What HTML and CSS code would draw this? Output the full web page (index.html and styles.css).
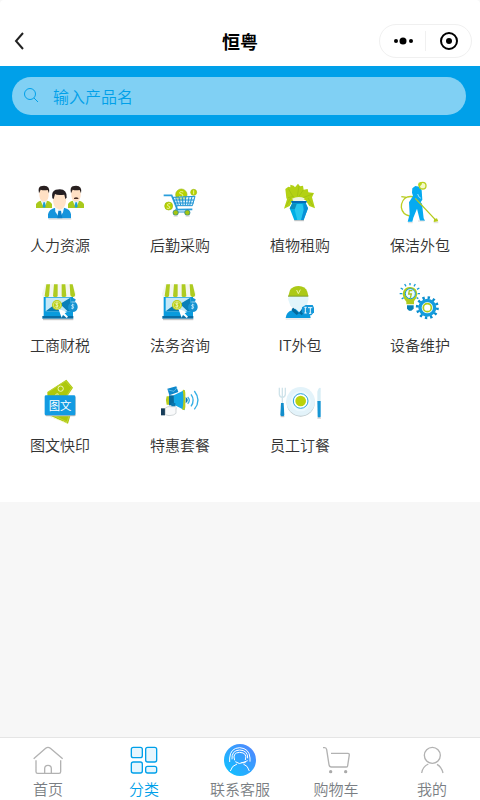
FILE: index.html
```
<!DOCTYPE html>
<html lang="zh-CN">
<head>
    <meta charset="UTF-8">
    <meta name="viewport" content="width=device-width, initial-scale=1.0">
    <title>恒粤</title>
    <link rel="stylesheet" href="styles.css">
</head>
<body>

    <header class="navbar">
        <button class="back" aria-label="返回">
            <svg width="16" height="20" viewBox="0 0 16 20"><path d="M11 2L4 10L11 18" fill="none" stroke="#222" stroke-width="2"/></svg>
        </button>
        <h1>恒粤</h1>
        <div class="capsule">
            <button aria-label="更多">
                <svg width="20" height="20" viewBox="0 0 20 20"><circle cx="3" cy="10" r="2"/><circle cx="10" cy="10" r="3.500"/><circle cx="18" cy="10" r="2"/></svg>
            </button>
            <button aria-label="关闭">
                <svg width="20" height="20" viewBox="0 0 20 20"><circle cx="10" cy="10" r="8" fill="none" stroke="#000" stroke-width="2"/><circle cx="10" cy="10" r="3"/></svg>
            </button>
        </div>
    </header>

    <form class="search">
        <label class="search-box">
            <svg width="16" height="16" viewBox="0 0 16 16" fill="none" stroke="#00a0e9"><circle cx="7" cy="6" r="5.500"/><path d="M11 10l4 4"/></svg>
            <input type="text" placeholder="输入产品名" aria-label="输入产品名">
        </label>
    </form>

    <main class="grid">
        <a class="item" href="#">
            <svg viewBox="30 0 180 180">
                <g id="clerk">
                    <path d="M48 114V103Q50 95 63 92L72 98L81 92Q94 95 96 103V114z" fill="#a9c91c"/>
                    <path d="M64 88h16v8l-8 17l-9-18z" fill="#e9f4f8"/>
                    <path d="M70 97h5l2 13l-5 4l-4-4z" fill="#1a9fd8"/>
                    <path d="M58 65Q56 94 72 95Q88 94 86 65Q84 56 72 56T58 65z" fill="#ffe0c4"/>
                    <path d="M57 70Q52 49 66 48Q92 44 87 70L83 60Q70 62 62 59z" fill="#29201f"/>
                </g>
                <use href="#clerk" x="96"/>
                <path d="M162 84q6-5 13 0v3h-13z" fill="#4a3028"/>
                <path d="M84 145V133Q87 117 106 113L118 119L132 113Q151 117 153 133V145z" fill="#1594dc"/>
                <path d="M105 110h28l-4 17-10 18-13-20z" fill="#f2faff"/>
                <path d="M115 122h8l4 23h-15z" fill="#0b80c9"/>
                <path d="M99 78Q97 116 118 119Q141 116 138 78Q135 66 119 66T99 78z" fill="#ffe2c8"/>
                <path d="M97 85Q93 64 107 59Q142 51 140 83L136 87L133 74Q112 77 105 72L101 87z" fill="#241e22"/>
                <path d="M86 147h68" stroke="#bbb" stroke-width="2"/>
            </svg>
            <span>人力资源</span>
        </a>
        <a class="item" href="#">
            <svg viewBox="30 0 180 180" fill="none">
                <g fill="#b8d200" stroke="#9bb91a" stroke-width="2"><circle cx="124" cy="74" r="17"/><circle cx="161" cy="67" r="9"/><circle cx="86" cy="108" r="12"/></g>
                <path d="M130 66q-12-4-11 4 12 2 10 9-5 5-12 0M91 101q-11-1-8 6 9 2 6 7-4 3-9 0M161 61v12" stroke="#edf69a" stroke-width="3"/>
                <path d="M71 76h24l17 43 45-1" stroke="#2a9edc" stroke-width="5"/>
                <path d="M99 82l66-3-8 28h-48z" fill="#c3eafa" fill-opacity=".6" stroke="#2094d4" stroke-width="3"/>
                <path d="M107 82l8 24M117 82l5 24M127 82l2 24M137 81l-1 25M147 80l-4 26M156 80l-7 27M103 90h60M106 99h55M111 108l-5 18h37" stroke="#2094d4" stroke-width="3"/>
                <g fill="#a5c411" stroke="#167f9e" stroke-width="2"><circle cx="107" cy="128" r="8"/><circle cx="142" cy="128" r="8"/></g>
                <path d="M101 138h12m24 0h12" stroke="#ccc" stroke-width="3"/>
            </svg>
            <span>后勤采购</span>
        </a>
        <a class="item" href="#">
            <svg viewBox="30 0 180 180">
                <path d="M79 84l-3-27 9-7 6 2 0-8 10 3 4 5 9-11 6 8 9-2 2 12 12-2 2 10 17 2-6 13 9 33-17-7-12-18-18-6-20 8-9 16-17 8 9-28z" fill="#b3d114"/>
                <path d="M85 56l14 24M117 48l-5 31M130 60l-14 20M158 72l-29 11M84 83l18-4M144 84l15 24M92 84l-14 24" fill="none" stroke="#9cbd12" stroke-width="2"/>
                <path d="M96 86q18-9 38-1l-7 9h-25z" fill="#edf4df"/>
                <path d="M94 93h46l-2 8 6 14-13 36h-28l-14-36 7-14z" fill="#00aee5"/>
                <path d="M94 93h46l-2 7H96z" fill="#056bb5"/>
                <path d="M96 101h19l-7 17-19-2z" fill="#0b8dbd"/><path d="M110 102h17l5 18-8 30h-12l-8-31z" fill="#27c6ee"/><path d="M131 101l7 1 6 13-14 36h-7l8-31z" fill="#0a90d6"/>
                <path d="M103 152h29" stroke="#bbb" stroke-width="3"/>
            </svg>
            <span>植物租购</span>
        </a>
        <a class="item" href="#">
            <svg viewBox="30 0 180 180">
                <path d="M120 94Q103 75 82 81Q64 88 64 112Q67 133 89 138" fill="none" stroke="#bccf23" stroke-width="4"/>
                <path d="M97 55l9-7 12 2 7 11 2 28-5 8 4 4 5 44 4 7H120l-9-36-11 27-3 12H83l6-22-2-36 12-19-3-10z" fill="#05aaf0"/>
                <path d="M113 72l4 9 6 4" fill="none" stroke="#e3f8ff" stroke-width="2"/>
                <circle cx="128" cy="47" r="10" fill="#f4fac8" stroke="#bbd022" stroke-width="4"/>
                <path d="M116 38l8-2 2 6-8 9-4-6z" fill="#b9d51f"/>
                <path d="M64 80l16 2M106 85l62 66" stroke="#b4ca19" stroke-width="4" fill="none"/>
                <path d="M162 148l9-3 4 9-14 2z" fill="#b4ca19"/>
                <path d="M84 158h14m16-5h19m28 5h14" stroke="#ccc" stroke-width="2"/>
            </svg>
            <span>保洁外包</span>
        </a>
        <a class="item" href="#">
            <svg viewBox="30 0 180 180">
                <g id="shop">
                    <path d="M76 43h82l10 29q0 10-9 10H75q-11-2-9-11z" fill="#f5f6ef"/>
                    <path d="M79 43h11l-3 36q-8 6-13-1zM102 43h11v36q-7 6-14 0zM125 43h11l3 36q-8 6-14 0zM149 43h9l7 30q1 9-8 8-5-1-6-5z" fill="#aecb20"/>
                    <path d="M71 81h88v58H71z" fill="#0a9bdd"/>
                    <path d="M77 83h74v41H77z" fill="#c3e8f8"/><path d="M77 124l29-22 19 22zM151 83l-31 19 23 22h8z" fill="#087eb8"/>
                    <path d="M67 138h93v8H67z" fill="#096da5"/><path d="M69 149h91" stroke="#bbb" stroke-width="3"/>
                    <circle cx="111" cy="105" r="15" fill="#b9cf17"/><circle cx="111" cy="105" r="11" fill="none" stroke="#e7ef9c" stroke-width="2"/>
                    <path d="M115 100q-8-3-8 2 9 3 7 7-3 3-8 0M111 97v17" fill="none" stroke="#f7fad7" stroke-width="2"/>
                    <path d="M153 88l5-5 9 5-2 7q9 7 8 18-3 13-15 13-14-2-14-14 1-11 11-15z" fill="#1592d1"/>
                    <path d="M163 105q-9-3-9 2 9 2 7 7-3 3-8 0M158 101v17M154 96h12" fill="none" stroke="#d8f3ff" stroke-width="2"/>
                    <path d="M115 116l26 10-7 4 10 10-4 4-11-10-4 9z" fill="#fff"/>
                </g>
            </svg>
            <span>工商财税</span>
        </a>
        <a class="item" href="#">
            <svg viewBox="30 0 180 180"><use href="#shop"/></svg>
            <span>法务咨询</span>
        </a>
        <a class="item" href="#">
            <svg viewBox="30 0 180 180">
                <path d="M87 77h56l3 9-6 22-17 14h-17l-15-15-7-20z" fill="#e1f5fb"/>
                <path d="M85 78l5-18q9-12 26-12 20 1 26 17l3 13z" fill="#acc917"/>
                <path d="M110 60l5 11 6-12" fill="none" stroke="#eef5aa" stroke-width="3"/>
                <path d="M84 77h61v3H84z" fill="#7f9e28"/>
                <path d="M77 144q2-18 19-23l10-5 11 10 12-8 21 16 2 10z" fill="#0a99dc"/>
                <path d="M95 117l5-4 17 17-7 5-13-11zM117 130l10-15 7 5-8 16z" fill="#04699c"/>
                <path d="M126 112l11-7h21l4 8v14l-8 9h-20l-9-10z" fill="#1598da"/>
                <path d="M133 112h7m-4 0v17m-3 0h7M144 113h13m-6 0v17m-4 0h7" fill="none" stroke="#eefaff" stroke-width="3"/>
                <path d="M77 147h74" stroke="#ccc" stroke-width="2"/>
            </svg>
            <span>IT外包</span>
        </a>
        <a class="item" href="#">
            <svg viewBox="30 0 180 180">
                <path d="M79 103V95Q64 79 70 63 77 50 92 51 112 54 112 73 111 84 102 94V103z" fill="#afcb1d"/>
                <circle cx="91" cy="71" r="15" fill="#ecfaff" stroke="#139cd6" stroke-width="3"/>
                <path d="M97 62H88l-2 10h8l-3 12" fill="none" stroke="#a9c31d" stroke-width="4"/>
                <path d="M81 106h20v10l-7 6h-7l-6-6z" fill="#0680b5"/>
                <path d="M90 39v7M74 42l4 7M106 42l-4 7M62 54l7 4M118 54l-7 4M59 71h8M120 71h-7M65 87l6-4M115 86l-5-3" stroke="#159bd6" stroke-width="4"/>
                <circle cx="142" cy="113" r="30" fill="none" stroke="#0b8dce" stroke-width="9" stroke-dasharray="7 8.700"/>
                <circle cx="142" cy="113" r="22" fill="#ebf8fc" stroke="#149cdd" stroke-width="10"/>
                <circle cx="142" cy="113" r="12" fill="#fff" stroke="#b0cd16" stroke-width="5"/>
            </svg>
            <span>设备维护</span>
        </a>
        <a class="item" href="#">
            <svg viewBox="30 0 180 180">
                <path d="M82 66l57-37 20 24-37 55H83zM79 132l65 29 18-61-60-7z" fill="#adc80c"/>
                <path d="M85 66l52-33 18 20-27 43M91 131l50 25 11-32" fill="none" stroke="#c9d94a" stroke-width="2"/>
                <circle cx="122" cy="56" r="8" fill="none" stroke="#f1f6b8" stroke-width="3"/><path d="M116 73q-7-5-10 3" stroke="#f1f6b8" stroke-width="3" fill="none"/>
                <path d="M91 140l50 20" stroke="#f4f7bd" stroke-width="3" stroke-dasharray="6 4"/>
                <rect x="76" y="79" width="91" height="60" rx="4" fill="#bbb"/>
                <rect x="74" y="76" width="92" height="60" rx="4" fill="#139be2"/>
                <text class="pic-text" x="120" y="119" text-anchor="middle">图文</text>
            </svg>
            <span>图文快印</span>
        </a>
        <a class="item" href="#">
            <svg viewBox="30 0 180 180">
                <path d="M82 56l27-7 6 17-27 10z" fill="#0c87cb"/><path d="M85 60l17 4 9-11" fill="none" stroke="#83cff1" stroke-width="2"/>
                <path d="M80 79h9v25h-9q-5-12 0-25z" fill="#b6cc1c"/>
                <path d="M87 76h20v30H87z" fill="#076a9d"/><path d="M101 76l33-16v61l-32-17z" fill="#13a7e5"/>
                <path d="M128 60q8-3 8 12v38q-1 13-9 9 6-31 1-59z" fill="#b6cc1c"/>
                <path d="M137 81q13 9 0 19" fill="#0678ae"/>
                <path d="M143 81q10 10 0 20M153 73q13 18 0 36M163 63q22 28 0 55" fill="none" stroke="#35afe5" stroke-width="4"/>
                <path d="M63 115h12v21H63z" fill="#173c59"/>
                <path d="M76 114l8-4h22q5 2 2 7v13l-8 5-13 2-11-3z" fill="#f9fafb" stroke="#bbc2c6" stroke-width="2"/>
                <path d="M94 109V98l12 1v10" fill="#0a75ac"/>
            </svg>
            <span>特惠套餐</span>
        </a>
        <a class="item" href="#">
            <svg viewBox="30 0 180 180">
                <circle cx="122" cy="98" r="42" fill="#bcc8cc"/><circle cx="122" cy="94" r="43" fill="#e3f3fa"/>
                <circle cx="122" cy="94" r="30" fill="#edf9fe"/><circle cx="122" cy="93" r="22" fill="#fff" stroke="#2ba3dc" stroke-width="3"/><circle cx="122" cy="93" r="16" fill="#bbd20b"/>
                <path d="M58 53v20q1 8 9 9 8-1 9-9V53M67 53v47" fill="none" stroke="#cfe3ea" stroke-width="4"/>
                <path d="M63 99h8l2 37q-5 7-12 0z" fill="#128dcb"/><path d="M172 94V65q4-14 10-11v40z" fill="#d7edf5"/><path d="M172 93h10v47q-6 5-9 0z" fill="#1695d4"/>
                <path d="M62 140h11m99 4h11" stroke="#bbb" stroke-width="3"/>
            </svg>
            <span>员工订餐</span>
        </a>
    </main>

    <nav class="tabbar">
        <a href="#">
            <svg viewBox="96 42 96 96" fill="none" stroke="#b2b2b2" stroke-width="4"><path d="M101 86l36-31q7-6 14 0l37 31M108 91v34q0 5 5 5h64q5 0 5-5V91M134 129v-13q0-10 10-10t10 10v13"/></svg>
            <span>首页</span>
        </a>
        <a href="#" class="active">
            <svg viewBox="384 42 96 96" fill="#e6f6fe" stroke="#00a0e9" stroke-width="4"><rect x="394" y="52" width="33" height="31" rx="6"/><rect x="437" y="52" width="33" height="44" rx="6"/><rect x="394" y="96" width="33" height="33" rx="6"/><rect x="437" y="109" width="33" height="20" rx="6"/></svg>
            <span>分类</span>
        </a>
        <a href="#">
            <svg viewBox="72 42 96 96" fill="none" stroke="#fff" stroke-width="3">
                <defs><linearGradient id="service" x1="1" y1="0" x2="0" y2="1"><stop offset=".1" stop-color="#4e88ff"/><stop offset=".85" stop-color="#16bcff"/></linearGradient></defs>
                <circle cx="120" cy="90" r="48" fill="url(#service)" stroke="none"/>
                <path d="M89 96V84Q91 54 119 53Q148 55 150 84V95M96 88Q94 61 119 60Q144 61 143 85M104 91Q96 68 119 67Q143 68 136 90M106 95q12 10 24 2l13-5M124 98h13M91 123q4-16 20-21M130 102q14 5 18 21"/>
            </svg>
            <span>联系客服</span>
        </a>
        <a href="#">
            <svg viewBox="360 42 96 96" fill="none" stroke="#b2b2b2" stroke-width="4"><path d="M369 53h5q5 0 6 6l7 45q1 7 7 7h45q4 0 4-4l5-33q0-4-4-4h-51"/><g fill="#aaa" stroke="none"><circle cx="392" cy="125" r="5"/><circle cx="437" cy="125" r="5"/></g></svg>
            <span>购物车</span>
        </a>
        <a href="#">
            <svg viewBox="648 42 96 96" fill="none" stroke="#b2b2b2" stroke-width="4"><circle cx="697" cy="76" r="24"/><path d="M665 129q2-18 20-27M711 103q14 8 18 26"/></svg>
            <span>我的</span>
        </a>
    </nav>

</body>
</html>
```

FILE: styles.css
```
* {
    box-sizing: border-box;
}
body {
    margin: 0;
    min-height: 100vh;
    display: flex;
    flex-direction: column;
    background: #f7f7f7;
    font-family: "Noto Sans CJK SC", sans-serif;
    font-weight: 350;
}
a {
    color: inherit;
    text-decoration: none;
}
button {
    display: flex;
    align-items: center;
    justify-content: center;
    padding: 0;
    border: none;
    background: none;
    cursor: pointer;
}

.navbar {
    display: grid;
    grid-template-columns: 1fr auto 1fr;
    align-items: center;
    height: 66px;
    padding: 16px 8px 0;
    background: #fff;
    border-radius: 4px 4px 0 0;
}
.navbar h1 {
    margin: 0;
    font-size: 18px;
    line-height: 24px;
    font-weight: bold;
}
.back {
    justify-self: start;
    padding: 0 4px;
}
.capsule {
    display: flex;
    justify-self: end;
    width: 93px;
    height: 34px;
    padding: 6px 0;
    border: 1px solid #f0f0f0;
    border-radius: 17px;
}
.capsule button {
    flex: 1;
}
.capsule button + button {
    border-left: 1px solid #f0f0f0;
}

.search {
    padding: 11px 14px 11px 12px;
    background: #00a0e9;
}
.search-box {
    display: flex;
    align-items: center;
    gap: 14px;
    height: 38px;
    padding: 0 11px;
    border-radius: 19px;
    background: #80d0f4;
}
.search-box input {
    flex: 1;
    min-width: 0;
    padding: 0;
    border: none;
    outline: none;
    background: none;
    font: inherit;
    font-size: 16px;
    color: #00a0e9;
}
.search-box input::placeholder {
    color: #00a0e9;
}

.grid {
    display: grid;
    grid-template-columns: repeat(4, 1fr);
    padding: 44px 0 32px;
    background: #fff;
}
.item {
    display: flex;
    flex-direction: column;
    align-items: center;
    gap: 5px;
    height: 100px;
    font-size: 15px;
    line-height: 20px;
    color: #333;
}
.item svg {
    width: 60px;
    height: 60px;
}
.pic-text {
    font-size: 34px;
    font-weight: 400;
    fill: #fff;
}

.tabbar {
    display: flex;
    position: sticky;
    bottom: 0;
    margin-top: auto;
    padding: 6px 0 1px;
    border-top: 1px solid #e5e5e5;
    background: #fff;
}
.tabbar a {
    flex: 1;
    display: flex;
    flex-direction: column;
    align-items: center;
    gap: 3px;
    font-size: 15px;
    line-height: 20px;
    color: #7a7e83;
}
.tabbar svg {
    width: 32px;
    height: 32px;
}
.tabbar .active {
    color: #00a0e9;
}
```
